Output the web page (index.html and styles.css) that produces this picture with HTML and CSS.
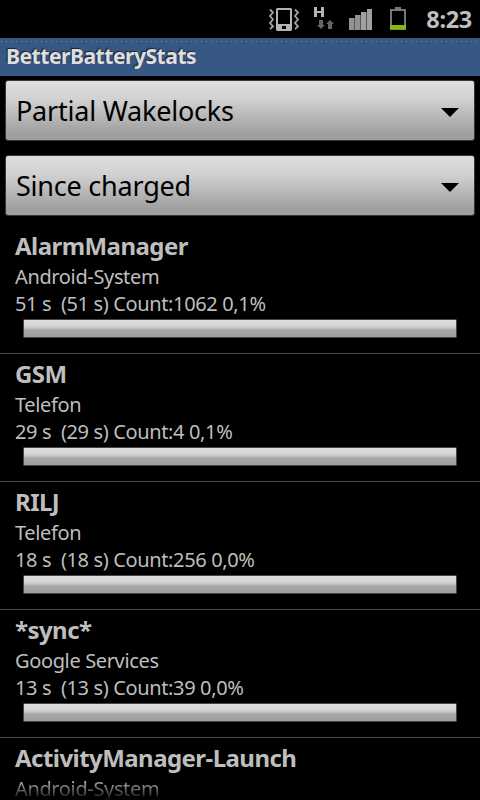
FILE: index.html
```html
<!DOCTYPE html>
<html lang="de">
<head>
    <meta charset="UTF-8">
    <meta name="viewport" content="width=device-width, initial-scale=1.0">
    <title>BetterBatteryStats</title>
    <link rel="stylesheet" href="styles.css">
</head>
<body>
    <div class="statusbar">
        <svg class="status-icons" width="148" height="38" viewBox="264 0 148 38">
            <!-- vibrate -->
            <path d="M270 9.500l3 3-3 3.500 3 3.500-3 3.500 3 3.500-3 2.500" fill="none" stroke="#a4a4a4" stroke-width="1.800"/>
            <path d="M295 9.500l3 3-3 3.500 3 3.500-3 3.500 3 3.500-3 2.500" fill="none" stroke="#a4a4a4" stroke-width="1.800"/>
            <path fill-rule="evenodd" fill="#b4b4b4" d="M277 8h14l1 1v21l-1 1h-14l-1-1V9zM278 10v14h12V10zM282 26v3h4v-3z"/>
            <!-- HSDPA -->
            <path fill="#b4b4b4" d="M314 7h3v4h4V7h3v10h-3v-4h-4v4h-3z"/>
            <path fill="#656565" d="M319 20h4v5h2l-4 4-4-4h2zM328 29h4v-5h2l-4-4-4 4h2z"/>
            <!-- signal -->
            <path fill="#929292" d="M349 18h5v12h-5zM355 15h5v15h-5z"/>
            <path fill="#a0a0a0" d="M361 12h5v18h-5zM367 9h5v21h-5z"/>
            <path fill="none" stroke="#555" d="M354.500 18v12M360.500 15v15M366.500 12v18"/>
            <!-- battery -->
            <path fill-rule="evenodd" fill="#777" d="M395 7h6v2h5v21h-16V9h5zM392 11v14h12V11z"/>
            <path fill="#87bd00" d="M390 25h16v4.500h-16z"/>
        </svg>
        <span class="clock">8:23</span>
    </div>
    <div class="titlebar"><span class="app-name">BetterBatteryStats</span></div>

    <div class="spinners">
        <div class="spinner">
            <span>Partial Wakelocks</span>
            <svg class="arrow" width="18" height="9" viewBox="0 0 18 9"><path d="M0 0h18L9 9z"/></svg>
        </div>
        <div class="spinner">
            <span>Since charged</span>
            <svg class="arrow" width="18" height="9" viewBox="0 0 18 9"><path d="M0 0h18L9 9z"/></svg>
        </div>
    </div>

    <div class="list">
        <div class="row">
            <div class="name">AlarmManager</div>
            <div class="detail">Android-System</div>
            <div class="detail">51 s&nbsp; (51 s) Count:1062 0,1%</div>
            <div class="bar"></div>
        </div>
        <div class="row">
            <div class="name">GSM</div>
            <div class="detail">Telefon</div>
            <div class="detail">29 s&nbsp; (29 s) Count:4 0,1%</div>
            <div class="bar"></div>
        </div>
        <div class="row">
            <div class="name">RILJ</div>
            <div class="detail">Telefon</div>
            <div class="detail">18 s&nbsp; (18 s) Count:256 0,0%</div>
            <div class="bar"></div>
        </div>
        <div class="row">
            <div class="name">*sync*</div>
            <div class="detail">Google Services</div>
            <div class="detail">13 s&nbsp; (13 s) Count:39 0,0%</div>
            <div class="bar"></div>
        </div>
        <div class="row last">
            <div class="name">ActivityManager-Launch</div>
            <div class="detail fading">Android-System</div>
        </div>
    </div>
</body>
</html>
```
FILE: styles.css
```css
* { box-sizing: border-box; }
body { margin: 0; width: 480px; height: 800px; overflow: hidden; display: flex; flex-direction: column; background: #000; color: #bebebe; font-family: "Noto Sans", "Open Sans", sans-serif; white-space: nowrap; }
.statusbar { flex: none; height: 38px; display: flex; justify-content: flex-end; padding-right: 8px; }
.status-icons { flex: none; }
.clock { width: 60px; text-align: right; font-size: 23.500px; font-weight: bold; line-height: 38px; letter-spacing: -0.300px; }
.titlebar { flex: none; height: 38px; padding-left: 6px; background: #375882; background-image: repeating-linear-gradient(90deg, #8a8f98 0 1px, transparent 1px 5px); background-size: 100% 1px; background-position: 1px 3px; background-repeat: no-repeat; }
.app-name { display: block; font-size: 21px; font-weight: bold; line-height: 37px; color: #dedede; letter-spacing: -0.450px; text-shadow: -1px -1px 1px #222; }
.spinners { flex: none; display: flex; flex-direction: column; gap: 14px; padding: 4px 5px 0; }
.spinner { height: 61px; display: flex; align-items: center; justify-content: space-between; padding: 0 15px 0 10px; border: 1px solid #3a3638; border-radius: 3px; background: linear-gradient(#dedede, #d2d2d2 30%, #b8b8b8 60%, #9f9f9f 90%); color: #000; font-size: 27px; letter-spacing: -0.220px; }
.arrow { flex: none; margin-top: 4px; }
.list { flex: none; margin-top: 10px; }
.row { height: 128px; padding: 3px 15px 0; border-bottom: 1px solid #4a4a4a; }
.name { height: 34px; font-size: 24px; font-weight: bold; line-height: 33px; letter-spacing: -0.550px; }
.detail { height: 27px; font-size: 20px; line-height: 27px; letter-spacing: -0.360px; }
.bar { height: 19px; margin: 2px 8px 0; border: 1px solid #494547; border-radius: 1px; background: linear-gradient(#dedede, #d2d2d2 40%, #a6a6a6 60%, #9e9e9e); }
.last { height: 62px; border-bottom: none; }
.fading { height: 25px; color: transparent; background: linear-gradient(#bebebe 20%, #111 96%); background-clip: text; -webkit-background-clip: text; }
```
